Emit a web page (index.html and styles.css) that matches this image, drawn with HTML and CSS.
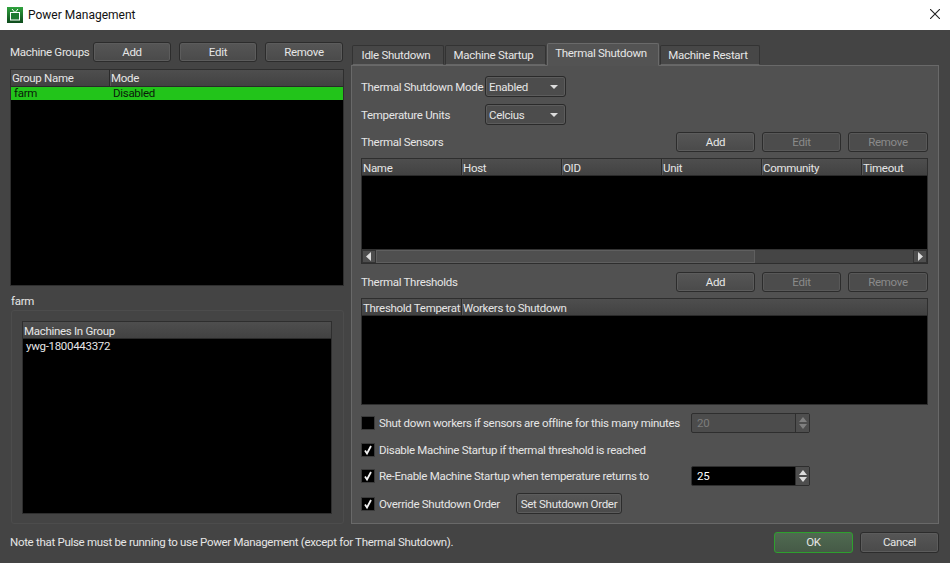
FILE: index.html
```html
<!DOCTYPE html>
<html lang="en">
<head>
<meta charset="utf-8">
<title>Power Management</title>
<link rel="stylesheet" href="styles.css">
</head>
<body>
<div class="window">
  <header class="titlebar">
    <svg class="app-icon" width="16" height="16" viewBox="0 0 16 16"><defs><linearGradient id="tvg" x1="0" y1="0" x2="0" y2="1"><stop offset="0" stop-color="#2fa33d"/><stop offset="1" stop-color="#0e4a1c"/></linearGradient></defs><rect width="16" height="16" fill="url(#tvg)"/><path d="M5 2 L7.5 5 M11 2 L8.5 5" stroke="#fff" stroke-width="1" fill="none"/><rect x="3.5" y="5.5" width="9" height="7.5" fill="#1f7a30" stroke="#fff" stroke-width="1"/></svg>
    <span class="title">Power Management</span>
    <svg class="close" width="10" height="10" viewBox="0 0 10 10"><path d="M0 0 L10 10 M10 0 L0 10" stroke="#222" stroke-width="1.1" fill="none"/></svg>
  </header>
  <div class="content">
    <div class="main">
      <section class="left">
        <div class="toolbar">
          <span class="tool-label">Machine Groups</span>
          <button class="btn btn-left">Add</button>
          <button class="btn btn-left">Edit</button>
          <button class="btn btn-left">Remove</button>
        </div>
        <div class="table groups">
          <div class="thead">
            <div class="th w-group">Group Name</div>
            <div class="th">Mode</div>
          </div>
          <div class="row-selected"><span class="w-group-cell">farm</span><span>Disabled</span></div>
        </div>
        <div class="farm-label">farm</div>
        <div class="groupbox">
          <div class="table machines">
            <div class="thead"><div class="th">Machines In Group</div></div>
            <div class="cell">ywg-1800443372</div>
          </div>
        </div>
      </section>
      <section class="right">
        <nav class="tabs">
          <div class="tab t1">Idle Shutdown</div>
          <div class="tab t2">Machine Startup</div>
          <div class="tab active t3">Thermal Shutdown</div>
          <div class="tab t4">Machine Restart</div>
        </nav>
        <div class="pane">
          <div class="form-row">
            <span class="form-label">Thermal Shutdown Mode</span>
            <div class="combo"><span>Enabled</span><i class="arrow"></i></div>
          </div>
          <div class="form-row second">
            <span class="form-label">Temperature Units</span>
            <div class="combo"><span>Celcius</span><i class="arrow"></i></div>
          </div>
          <div class="bar">
            <span>Thermal Sensors</span>
            <div class="bar-btns">
              <button class="btn btn-right">Add</button>
              <button class="btn btn-right" disabled>Edit</button>
              <button class="btn btn-right" disabled>Remove</button>
            </div>
          </div>
          <div class="table sensors">
            <div class="thead">
              <div class="th w-col">Name</div>
              <div class="th w-col">Host</div>
              <div class="th w-col">OID</div>
              <div class="th w-col">Unit</div>
              <div class="th w-col">Community</div>
              <div class="th">Timeout</div>
            </div>
            <div class="black"></div>
            <div class="hscroll">
              <div class="sb-btn"><svg width="6" height="9" viewBox="0 0 6 9"><path d="M5 0 V9 L0 4.5 Z" fill="#ddd"/></svg></div>
              <div class="sb-thumb"></div>
              <div class="sb-btn"><svg width="6" height="9" viewBox="0 0 6 9"><path d="M1 0 V9 L6 4.5 Z" fill="#ddd"/></svg></div>
            </div>
          </div>
          <div class="bar bar2">
            <span>Thermal Thresholds</span>
            <div class="bar-btns">
              <button class="btn btn-right">Add</button>
              <button class="btn btn-right" disabled>Edit</button>
              <button class="btn btn-right" disabled>Remove</button>
            </div>
          </div>
          <div class="table thresholds">
            <div class="thead">
              <div class="th w-thr">Threshold Temperat</div>
              <div class="th">Workers to Shutdown</div>
            </div>
          </div>
          <div class="check-row r1">
            <span class="check"></span><span class="check-label w-offline">Shut down workers if sensors are offline for this many minutes</span>
            <div class="spin disabled"><span class="spin-val">20</span><div class="spin-btns"><i class="up"></i><i class="down"></i></div></div>
          </div>
          <div class="check-row r2">
            <span class="check"><svg width="12" height="12" viewBox="0 0 12 12"><path d="M3 6.5 L5 9.5 L9 2" stroke="#f2f2f2" stroke-width="1.8" fill="none"/></svg></span><span class="check-label">Disable Machine Startup if thermal threshold is reached</span>
          </div>
          <div class="check-row r3">
            <span class="check"><svg width="12" height="12" viewBox="0 0 12 12"><path d="M3 6.5 L5 9.5 L9 2" stroke="#f2f2f2" stroke-width="1.8" fill="none"/></svg></span><span class="check-label w-offline">Re-Enable Machine Startup when temperature returns to</span>
            <div class="spin"><span class="spin-val">25</span><div class="spin-btns"><i class="up"></i><i class="down"></i></div></div>
          </div>
          <div class="check-row r4">
            <span class="check"><svg width="12" height="12" viewBox="0 0 12 12"><path d="M3 6.5 L5 9.5 L9 2" stroke="#f2f2f2" stroke-width="1.8" fill="none"/></svg></span><span class="check-label w-order">Override Shutdown Order</span>
            <button class="btn btn-order">Set Shutdown Order</button>
          </div>
        </div>
      </section>
    </div>
    <footer class="footer">
      <span>Note that Pulse must be running to use Power Management (except for Thermal Shutdown).</span>
      <div class="footer-btns">
        <button class="btn btn-foot ok">OK</button>
        <button class="btn btn-foot">Cancel</button>
      </div>
    </footer>
  </div>
</div>
</body>
</html>
```

FILE: styles.css
```css
* { box-sizing: border-box; }
html, body { margin: 0; padding: 0; }
body { width: 950px; height: 563px; overflow: hidden; font-family: "Roboto", "Open Sans", sans-serif; font-size: 11.5px; letter-spacing: -0.3px; color: #e6e6e6; }
.window { display: flex; flex-direction: column; height: 563px; background: #444; }
.titlebar { height: 30px; flex: none; background: #fff; display: flex; align-items: center; padding: 0 10px 0 7px; color: #111; font-size: 12px; letter-spacing: 0; }
.app-icon { margin-right: 5px; margin-top: -1px; }
.title { flex: 1; }
.close { margin-top: -2px; }
.content { flex: 1; display: flex; flex-direction: column; padding: 12px 11px 11px 10px; }
.main { display: flex; gap: 7px; height: 482px; flex: none; }
.left { width: 334px; flex: none; display: flex; flex-direction: column; }
.right { width: 588px; flex: none; display: flex; flex-direction: column; padding-top: 2px; }
.btn { font: inherit; letter-spacing: inherit; color: #e6e6e6; background: linear-gradient(#565656, #4a4a4a); border: 1px solid #2c2c2c; border-radius: 3px; box-shadow: inset 0 0 0 1px #5c5c5c; padding: 0; white-space: nowrap; }
.btn:disabled { color: #8a8a8a; background: #4c4c4c; box-shadow: inset 0 0 0 1px #585858; }
.toolbar { display: flex; align-items: center; height: 20px; flex: none; }
.tool-label { width: 83px; flex: none; white-space: nowrap; }
.btn-left { width: 78px; height: 20px; flex: none; margin-right: 8px; }
.btn-left:last-child { margin-right: 0; }
.table { background: #000; border: 1px solid #2e2e2e; display: flex; flex-direction: column; flex: none; }
.thead { display: flex; height: 17px; background: linear-gradient(#4e4e4e, #424242); border-bottom: 1px solid #2a2a2a; flex: none; }
.th { padding-left: 1px; line-height: 19px; border-right: 1px solid #2a2a2a; box-shadow: 1px 0 0 #5a5a5a; white-space: nowrap; overflow: hidden; flex: none; }
.th:last-child { border-right: 0; box-shadow: none; flex: 1; }
.groups { height: 217px; margin-top: 7px; }
.groups .th { line-height: 17px; }
.w-group { width: 99px; }
.row-selected { display: flex; height: 13px; background: #22c41a; color: #0a1a0a; line-height: 13px; padding-left: 3px; }
.w-group-cell { width: 99px; }
.farm-label { margin-top: 7px; height: 17px; line-height: 17px; padding-left: 1px; flex: none; }
.groupbox { margin: 0 0 0 1px; height: 214px; flex: none; border: 1px solid #4c4c4c; border-radius: 3px; padding: 10px 11px 9px 10px; display: flex; }
.machines { flex: 1; }
.cell { padding-left: 3px; line-height: 15px; }
.tabs { display: flex; align-items: flex-end; height: 21px; flex: none; padding-left: 1px; position: relative; z-index: 1; }
.tab { height: 20px; line-height: 19px; text-align: center; padding-right: 4px; background: #474747; border: 1px solid #333; border-bottom: 1px solid #666; border-radius: 2px 2px 0 0; margin-right: 1px; white-space: nowrap; }
.tab.active { height: 23px; line-height: 19px; background: #535353; border-color: #6a6a6a; border-bottom-color: #535353; margin-bottom: -1px; }
.t1 { width: 92px; }
.t2 { width: 101px; }
.t3 { width: 112px; }
.t4 { width: 100px; }
.pane { flex: 1; background: #515151; border: 1px solid #696969; padding: 10px 10px 0 9px; display: flex; flex-direction: column; }
.form-row { display: flex; align-items: center; height: 21px; flex: none; }
.form-row.second { margin-top: 7px; }
.form-label { width: 124px; flex: none; white-space: nowrap; }
.combo { width: 81px; height: 21px; display: flex; align-items: center; justify-content: space-between; padding: 0 6px 0 3px; border: 1px solid #2a2a2a; border-radius: 3px; background: #4c4c4c; box-shadow: inset 0 0 0 1px #5c5c5c; }
.arrow { width: 0; height: 0; border-left: 4px solid transparent; border-right: 4px solid transparent; border-top: 4px solid #ddd; margin-right: 1px; }
.bar { display: flex; justify-content: space-between; align-items: center; height: 20px; margin-top: 7px; flex: none; }
.bar2 { margin-top: 8px; }
.bar-btns { display: flex; gap: 7px; }
.btn-right { width: 79px; height: 20px; }
.btn-right:last-child { width: 80px; }
.sensors { height: 106px; margin-top: 6px; }
.w-col { width: 100px; }
.black { flex: 1; background: #000; }
.hscroll { height: 14px; background: #454545; display: flex; border-top: 1px solid #333; flex: none; }
.sb-btn { width: 14px; background: #4e4e4e; border: 1px solid #333; display: flex; align-items: center; justify-content: center; }
.sb-thumb { width: 379px; background: #4f4f4f; border: 1px solid #5f5f5f; margin-right: auto; }
.thresholds { height: 107px; margin-top: 6px; }
.w-thr { width: 100px; }
.check-row { display: flex; align-items: center; flex: none; height: 20px; }
.r1 { margin-top: 8px; }
.r2 { margin-top: 7px; }
.r3 { margin-top: 6px; }
.r4 { margin-top: 7px; height: 21px; }
.check { width: 14px; height: 14px; background: #000; border: 1px solid #3a3a3a; display: inline-flex; flex: none; margin-right: 4px; }
.check-label { white-space: nowrap; flex: none; }
.w-offline { width: 312px; }
.w-order { width: 137px; }
.spin { width: 119px; height: 20px; flex: none; background: #000; border: 1px solid #2e2e2e; border-radius: 2px; display: flex; color: #fff; }
.spin.disabled { background: #4c4c4c; color: #7d7d7d; }
.spin-val { flex: 1; padding-left: 5px; line-height: 19px; }
.spin-btns { width: 14px; background: #4e4e4e; border-left: 1px solid #2e2e2e; display: flex; flex-direction: column; align-items: center; justify-content: center; gap: 2px; }
.up { width: 0; height: 0; border-left: 4px solid transparent; border-right: 4px solid transparent; border-bottom: 5px solid #ddd; }
.down { width: 0; height: 0; border-left: 4px solid transparent; border-right: 4px solid transparent; border-top: 5px solid #ddd; }
.spin.disabled .up { border-bottom-color: #808080; }
.spin.disabled .down { border-top-color: #808080; }
.btn-order { width: 106px; height: 21px; flex: none; }
.footer { display: flex; align-items: center; justify-content: space-between; height: 22px; margin-top: 7px; flex: none; }
.footer-btns { display: flex; gap: 7px; }
.btn-foot { width: 79px; height: 21px; }
.btn-foot.ok { background: linear-gradient(#4f6a50, #465a47); border-color: #2ea02e; box-shadow: none; }
```
